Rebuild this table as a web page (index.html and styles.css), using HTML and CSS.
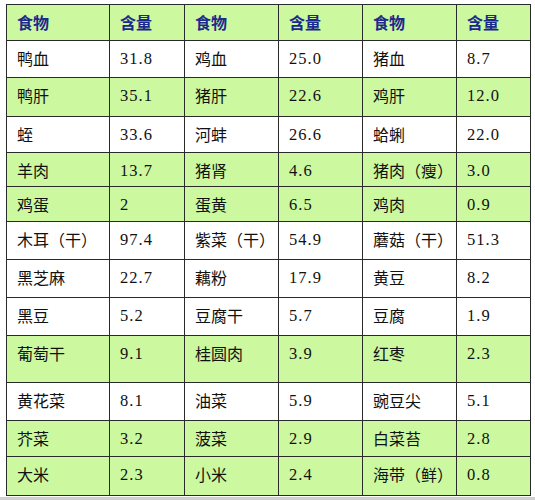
FILE: index.html
```html
<!DOCTYPE html>
<html lang="zh">
<head>
<meta charset="utf-8">
<link rel="stylesheet" href="styles.css">
</head>
<body>
<div class="frame">
<table class="tbl">
<colgroup>
<col class="c1"><col class="c2"><col class="c3"><col class="c4"><col class="c5"><col class="c6">
</colgroup>
<tr class="g head h36"><td>食物</td><td>含量</td><td>食物</td><td>含量</td><td>食物</td><td>含量</td></tr>
<tr class="w h37"><td>鸭血</td><td>31.8</td><td>鸡血</td><td>25.0</td><td>猪血</td><td>8.7</td></tr>
<tr class="g h39"><td>鸭肝</td><td>35.1</td><td>猪肝</td><td>22.6</td><td>鸡肝</td><td>12.0</td></tr>
<tr class="w h36"><td>蛭</td><td>33.6</td><td>河蚌</td><td>26.6</td><td>蛤蜊</td><td>22.0</td></tr>
<tr class="g h34"><td>羊肉</td><td>13.7</td><td>猪肾</td><td>4.6</td><td>猪肉（瘦）</td><td>3.0</td></tr>
<tr class="g h35"><td>鸡蛋</td><td>2</td><td>蛋黄</td><td>6.5</td><td>鸡肉</td><td>0.9</td></tr>
<tr class="w h38"><td>木耳（干）</td><td>97.4</td><td>紫菜（干）</td><td>54.9</td><td>蘑菇（干）</td><td>51.3</td></tr>
<tr class="w h38"><td>黑芝麻</td><td>22.7</td><td>藕粉</td><td>17.9</td><td>黄豆</td><td>8.2</td></tr>
<tr class="w h38"><td>黑豆</td><td>5.2</td><td>豆腐干</td><td>5.7</td><td>豆腐</td><td>1.9</td></tr>
<tr class="g h47"><td>葡萄干</td><td>9.1</td><td>桂圆肉</td><td>3.9</td><td>红枣</td><td>2.3</td></tr>
<tr class="w h38"><td>黄花菜</td><td>8.1</td><td>油菜</td><td>5.9</td><td>豌豆尖</td><td>5.1</td></tr>
<tr class="g h36"><td>芥菜</td><td>3.2</td><td>菠菜</td><td>2.9</td><td>白菜苔</td><td>2.8</td></tr>
<tr class="g h39"><td>大米</td><td>2.3</td><td>小米</td><td>2.4</td><td>海带（鲜）</td><td>0.8</td></tr>
</table>
</div>
<div class="shade"></div>
</body>
</html>
```
FILE: styles.css
```css
html, body {
  margin: 0;
  padding: 0;
  background: #ffffff;
}
.frame {
  padding: 4px 0 0 6px;
  height: 493px;
  box-sizing: border-box;
}
.tbl {
  border-collapse: collapse;
  table-layout: fixed;
  width: 525px;
  font-family: "Noto Sans CJK SC", sans-serif;
  font-size: 16px;
  line-height: 20px;
  color: #111111;
}
.c1 { width: 103px; }
.c2 { width: 75px; }
.c3 { width: 94px; }
.c4 { width: 84px; }
.c5 { width: 94px; }
.c6 { width: 74px; }
.tbl td {
  border: 1px solid #2a2a2a;
  padding: 7px 0 0 10px;
  vertical-align: top;
  white-space: nowrap;
  overflow: hidden;
}
.tbl tr:not(.head) td:nth-child(even) {
  font-family: "Liberation Serif", "Noto Sans CJK SC", serif;
  font-size: 16.5px;
  letter-spacing: 1px;
  padding-top: 8px;
  line-height: 19px;
}
.g { background: #ccf8a0; }
.w { background: #ffffff; }
.head td {
  color: #1a2a8c;
  font-weight: 700;
}
.h34 { height: 34px; }
.h35 { height: 35px; }
.h36 { height: 36px; }
.h37 { height: 37px; }
.h38 { height: 38px; }
.h39 { height: 39px; }
.h47 { height: 47px; }
.shade {
  height: 3px;
  margin-top: 4px;
  background: #d0d0d0;
}
```
